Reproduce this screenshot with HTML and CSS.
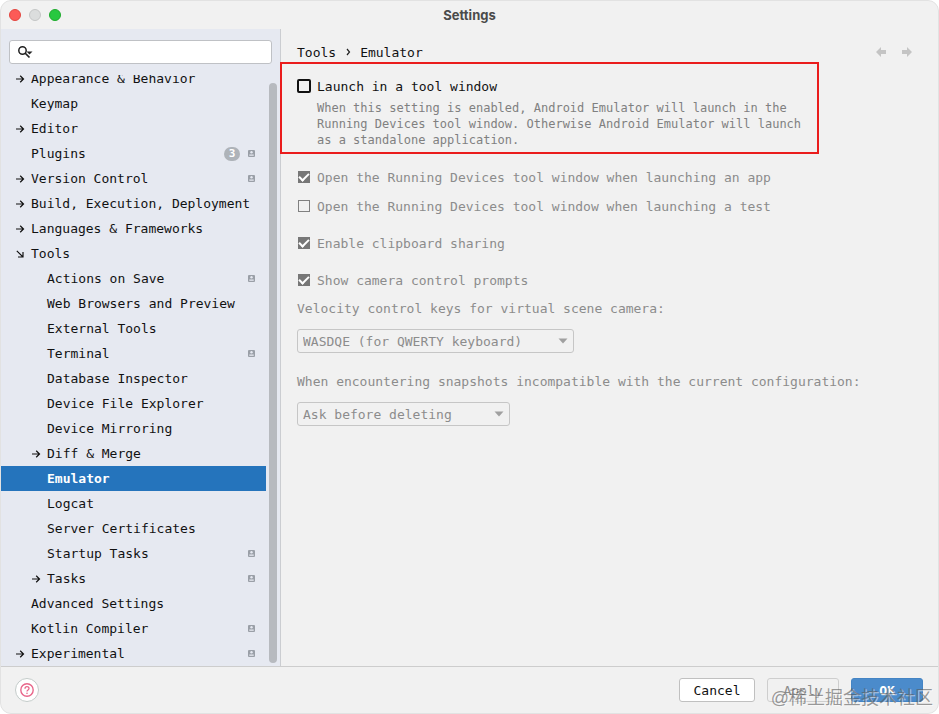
FILE: index.html
```html
<!DOCTYPE html>
<html lang="en">
<head>
    <meta charset="UTF-8">
    <meta name="viewport" content="width=device-width, initial-scale=1.0">
    <title>Settings</title>
    <link rel="stylesheet" href="styles.css">
</head>
<body>
<svg class="defs" width="0" height="0" aria-hidden="true">
    <symbol id="right" viewBox="0 0 10 10"><path d="M1 5H8.500M5.200 1.800L8.500 5L5.200 8.200" fill="none" stroke="currentColor" stroke-width="1.200"/></symbol>
    <symbol id="down" viewBox="0 0 10 10"><path d="M1.800 1.800L7.800 7.800M8 3V8H3" fill="none" stroke="currentColor" stroke-width="1.200"/></symbol>
    <symbol id="project" viewBox="0 0 9 9"><rect x="1" y="1" width="7" height="7" rx="1" fill="#9a9fa7"/><circle cx="4.500" cy="3.300" r="1.200" fill="#e6e9f1"/><path d="M2.300 6.800V5.500H6.700V6.800Z" fill="#e6e9f1"/></symbol>
    <symbol id="caret" viewBox="0 0 10 6"><path d="M0.500 0.500H9.500L5 5.500Z" fill="#a0a0a0"/></symbol>
</svg>
<div class="window">
    <header class="titlebar">
        <div class="lights">
            <button class="light red" aria-label="Close"></button>
            <button class="light grey" aria-label="Minimize"></button>
            <button class="light green" aria-label="Zoom"></button>
        </div>
        <h1>Settings</h1>
    </header>

    <div class="body">
        <aside class="sidebar">
            <div class="search">
                <svg width="16" height="16" viewBox="0 0 16 16" aria-hidden="true"><circle cx="4.500" cy="6.500" r="3.700" fill="none" stroke="#222" stroke-width="1.500"/><path d="M7 9L11.500 13.500" stroke="#222" stroke-width="1.700"/><path d="M8.500 7.500H14.500L11.500 10.500Z" fill="#222"/></svg>
                <input type="text" aria-label="Search settings">
            </div>
            <nav class="tree">
                <ul>
                    <li><a href="#"><svg class="arrow"><use href="#right"/></svg>Appearance &amp; Behavior</a></li>
                    <li><a href="#">Keymap</a></li>
                    <li><a href="#"><svg class="arrow"><use href="#right"/></svg>Editor</a></li>
                    <li><a href="#">Plugins<span class="count">3</span><svg class="project"><use href="#project"/></svg></a></li>
                    <li><a href="#"><svg class="arrow"><use href="#right"/></svg>Version Control<svg class="project"><use href="#project"/></svg></a></li>
                    <li><a href="#"><svg class="arrow"><use href="#right"/></svg>Build, Execution, Deployment</a></li>
                    <li><a href="#"><svg class="arrow"><use href="#right"/></svg>Languages &amp; Frameworks</a></li>
                    <li><a href="#"><svg class="arrow"><use href="#down"/></svg>Tools</a></li>
                    <li class="sub"><a href="#">Actions on Save<svg class="project"><use href="#project"/></svg></a></li>
                    <li class="sub"><a href="#">Web Browsers and Preview</a></li>
                    <li class="sub"><a href="#">External Tools</a></li>
                    <li class="sub"><a href="#">Terminal<svg class="project"><use href="#project"/></svg></a></li>
                    <li class="sub"><a href="#">Database Inspector</a></li>
                    <li class="sub"><a href="#">Device File Explorer</a></li>
                    <li class="sub"><a href="#">Device Mirroring</a></li>
                    <li class="sub"><a href="#"><svg class="arrow"><use href="#right"/></svg>Diff &amp; Merge</a></li>
                    <li class="sub"><a href="#" class="selected">Emulator</a></li>
                    <li class="sub"><a href="#">Logcat</a></li>
                    <li class="sub"><a href="#">Server Certificates</a></li>
                    <li class="sub"><a href="#">Startup Tasks<svg class="project"><use href="#project"/></svg></a></li>
                    <li class="sub"><a href="#"><svg class="arrow"><use href="#right"/></svg>Tasks<svg class="project"><use href="#project"/></svg></a></li>
                    <li><a href="#">Advanced Settings</a></li>
                    <li><a href="#">Kotlin Compiler<svg class="project"><use href="#project"/></svg></a></li>
                    <li><a href="#"><svg class="arrow"><use href="#right"/></svg>Experimental<svg class="project"><use href="#project"/></svg></a></li>
                </ul>
                <div class="scrollbar"></div>
            </nav>
        </aside>

        <main>
            <div class="top">
                <div class="crumbs"><span>Tools</span><svg width="8" height="10" viewBox="0 0 8 10" aria-hidden="true"><path d="M3 2L5.500 5L3 8" fill="none" stroke="#222" stroke-width="1.200"/></svg><span>Emulator</span></div>
                <div class="history">
                    <button aria-label="Back"><svg width="12" height="12" viewBox="0 0 12 12"><path d="M1 6L6 1V4H11V8H6V11Z" fill="#c4c4c4"/></svg></button>
                    <button aria-label="Forward"><svg width="12" height="12" viewBox="0 0 12 12"><path d="M11 6L6 1V4H1V8H6V11Z" fill="#c4c4c4"/></svg></button>
                </div>
            </div>

            <section class="highlight">
                <label class="check active"><input type="checkbox">Launch in a tool window</label>
                <p>When this setting is enabled, Android Emulator will launch in the Running Devices tool window. Otherwise Android Emulator will launch as a standalone application.</p>
            </section>

            <form class="options">
                <label class="check"><input type="checkbox" checked disabled>Open the Running Devices tool window when launching an app</label>
                <label class="check"><input type="checkbox" disabled>Open the Running Devices tool window when launching a test</label>
                <label class="check apart"><input type="checkbox" checked disabled>Enable clipboard sharing</label>
                <label class="check apart"><input type="checkbox" checked disabled>Show camera control prompts</label>
                <label class="caption" for="keys">Velocity control keys for virtual scene camera:</label>
                <div class="select wide">
                    <select id="keys" disabled><option>WASDQE (for QWERTY keyboard)</option></select>
                    <svg><use href="#caret"/></svg>
                </div>
                <label class="caption apart" for="snapshots">When encountering snapshots incompatible with the current configuration:</label>
                <div class="select">
                    <select id="snapshots" disabled><option>Ask before deleting</option></select>
                    <svg><use href="#caret"/></svg>
                </div>
            </form>
        </main>
    </div>

    <footer>
        <button class="help" aria-label="Help"><svg width="14" height="14" viewBox="0 0 14 14"><circle cx="7" cy="7" r="6.200" fill="none" stroke="#e8668a" stroke-width="1.400"/><path d="M5 5.700C5 3 9 3 9 5.500C9 7 7 6.900 7 8.500" fill="none" stroke="#e8668a" stroke-width="1.300"/><circle cx="7" cy="10.300" r="0.800" fill="#e8668a"/></svg></button>
        <button class="btn cancel">Cancel</button>
        <button class="btn apply" disabled>Apply</button>
        <button class="btn ok">OK</button>
        <div class="watermark">@稀土掘金技术社区</div>
    </footer>
</div>
</body>
</html>
```
FILE: styles.css
```css
* {
    box-sizing: border-box;
}
body {
    margin: 0;
    background-color: #fff;
    font-family: "DejaVu Sans Mono", monospace;
    font-size: 13px;
    color: #111;
}
button, input, select {
    font: inherit;
    color: inherit;
    padding: 0;
}
.defs {
    position: absolute;
}
.window {
    display: flex;
    flex-direction: column;
    height: 100vh;
    background-color: #f1f1f1;
    border: 1px solid #e2e2e2;
    border-radius: 11px;
    overflow: hidden;
}

/* title bar */
.titlebar {
    flex: none;
    display: grid;
    grid-template-columns: 1fr auto 1fr;
    align-items: center;
    height: 28px;
    padding-left: 8px;
    padding-right: 8px;
}
.lights {
    display: flex;
    gap: 8px;
}
.light {
    width: 12px;
    height: 12px;
    border: 1px solid #c4c6c6;
    border-radius: 50%;
    background-color: #dbdddd;
}
.light.red {
    background-color: #fc5b57;
    border-color: #e2463f;
}
.light.green {
    background-color: #27c840;
    border-color: #1daa2c;
}
h1 {
    margin: 0;
    font-family: Inter, sans-serif;
    font-size: 13px;
    font-weight: 700;
    color: #4a4a4a;
}

.body {
    flex: 1;
    display: flex;
    min-height: 0;
}

/* sidebar */
.sidebar {
    flex: none;
    display: flex;
    flex-direction: column;
    width: 280px;
    background-color: #e6e9f1;
    border-right: 1px solid #cbcdd1;
}
.search {
    flex: none;
    display: flex;
    align-items: center;
    height: 24px;
    margin: 11px 8px;
    padding-left: 8px;
    background-color: #fff;
    border: 1px solid #bfc1c5;
    border-radius: 3px;
}
.search input {
    flex: 1;
    min-width: 0;
    border: 0;
    outline: 0;
    background: none;
}
/* the list is scrolled to its end */
.tree {
    flex: 1;
    display: flex;
    min-height: 0;
    overflow: hidden;
}
.tree ul {
    flex: 1;
    display: flex;
    flex-direction: column;
    justify-content: flex-end;
    margin: 0;
    padding: 0;
    list-style: none;
}
.tree li {
    flex: none;
}
.tree a {
    display: flex;
    align-items: center;
    height: 25px;
    padding: 0 10px 0 30px;
    color: #111;
    text-decoration: none;
    white-space: nowrap;
}
.tree .sub a {
    padding-left: 46px;
}
.tree .selected {
    background-color: #2574bc;
    color: #fff;
    font-weight: bold;
}
.arrow {
    flex: none;
    width: 10px;
    height: 10px;
    margin-left: -16px;
    margin-right: 6px;
}
.project {
    width: 9px;
    height: 9px;
    margin-left: auto;
}
.count {
    width: 16px;
    height: 14px;
    margin-left: auto;
    border-radius: 7px;
    background-color: #aeb3b9;
    color: #fff;
    font-size: 11px;
    font-weight: bold;
    line-height: 14px;
    text-align: center;
}
.count + .project {
    margin-left: 7px;
}
.scrollbar {
    width: 8px;
    margin: 8px 3px 3px;
    border-radius: 4px;
    background-color: #b7babf;
}

/* settings page */
main {
    flex: 1;
    min-width: 0;
}
.top {
    display: flex;
    justify-content: space-between;
    align-items: center;
    height: 33px;
    padding: 13px 25px 0 16px;
}
.crumbs {
    display: flex;
    align-items: center;
    gap: 8px;
}
.history {
    display: flex;
    gap: 14px;
}
.history button {
    display: flex;
    border: 0;
    background: none;
}
.highlight {
    max-width: 539px;
    margin-left: -1px;
    padding: 13px 10px 4px 15px;
    border: 2px solid #ea1c1c;
}
.highlight p {
    margin: 5px 0 0 20px;
    font-size: 12px;
    line-height: 16px;
    color: #808080;
}
.check {
    display: flex;
    align-items: center;
    gap: 7px;
    height: 18px;
    padding-left: 1px;
    color: #8c8c8c;
}
.check.active {
    gap: 6px;
    padding-left: 0;
    color: #111;
}
.check input {
    appearance: none;
    flex: none;
    display: grid;
    place-items: center;
    width: 12px;
    height: 12px;
    margin: 0;
    border: 1px solid #808080;
}
.check.active input {
    width: 14px;
    height: 14px;
    border: 2px solid #111;
    border-radius: 2px;
}
.check input:checked {
    background-color: #777;
    border-color: #777;
}
.check input:checked::after {
    content: "";
    width: 8px;
    height: 4px;
    margin-bottom: 3px;
    border-left: 2px solid #fff;
    border-bottom: 2px solid #fff;
    transform: rotate(-45deg);
}
.options {
    display: flex;
    flex-direction: column;
    align-items: flex-start;
    gap: 11px;
    padding: 14px 16px;
    color: #8c8c8c;
}
.apart {
    margin-top: 8px;
}
.caption {
    height: 18px;
    line-height: 18px;
}
.caption.apart {
    margin-top: 9px;
}
.select {
    position: relative;
    width: 213px;
}
.select.wide {
    width: 277px;
}
.select select {
    appearance: none;
    display: block;
    width: 100%;
    height: 24px;
    padding: 0 24px 0 5px;
    border: 1px solid #c6c6c6;
    border-radius: 3px;
    background-color: #f1f1f1;
    opacity: 1;
}
.select svg {
    position: absolute;
    top: 9px;
    right: 6px;
    width: 10px;
    height: 6px;
    pointer-events: none;
}

/* buttons */
footer {
    flex: none;
    position: relative;
    display: flex;
    align-items: center;
    gap: 12px;
    height: 47px;
    padding: 0 15px 0 14px;
    border-top: 1px solid #cdcdcd;
}
.help {
    display: grid;
    place-items: center;
    width: 24px;
    height: 24px;
    margin-right: auto;
    border: 1px solid #c3cbc9;
    border-radius: 50%;
    background-color: #fff;
}
.btn {
    width: 72px;
    height: 24px;
    border: 1px solid #c0c0c0;
    border-radius: 3px;
    background-color: #fff;
}
.cancel {
    width: 76px;
}
.apply {
    background-color: #f1f1f1;
    border-color: #cecece;
    color: #8c8c8c;
}
.ok {
    background-color: #4b8bcb;
    border-color: #4484c4;
    color: #fff;
    font-weight: bold;
}
.watermark {
    position: absolute;
    right: 5px;
    bottom: 2px;
    font-family: "Liberation Sans", "Noto Sans CJK SC", sans-serif;
    font-size: 18px;
    line-height: 26px;
    color: rgba(90, 90, 90, 0.6);
    text-shadow: 1px 1px 0 rgba(255, 255, 255, 0.5);
    pointer-events: none;
}
```
